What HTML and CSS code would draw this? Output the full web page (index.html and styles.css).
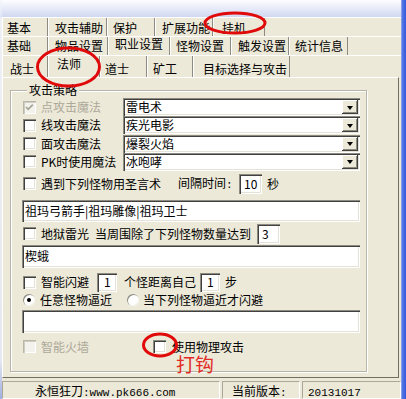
FILE: index.html
```html
<!DOCTYPE html>
<html lang="zh">
<head>
<meta charset="utf-8">
<title>挂机</title>
<link rel="stylesheet" href="styles.css">
</head>
<body>
<div class="window">
  <div class="lborder"></div>
  <div class="main">
    <div class="fade"></div>
    <div class="tabrow r1">
      <div class="tab w46 pl4">基本</div>
      <div class="tab w59 pl6">攻击辅助</div>
      <div class="tab w48">保护</div>
      <div class="tab w58 pl6">扩展功能</div>
      <div class="tab w52 pl8">挂机</div>
    </div>
    <div class="tabrow r2">
      <div class="tab w46 pl4">基础</div>
      <div class="tab w60 pl6">物品设置</div>
      <div class="tab w62 pl6 sel">职业设置</div>
      <div class="tab w61">怪物设置</div>
      <div class="tab w58 pl6">触发设置</div>
      <div class="tab w59">统计信息</div>
    </div>
    <div class="tabrow r3">
      <div class="tab w46 pl7">战士</div>
      <div class="tab w52 pl8 sel">法师</div>
      <div class="tab w47 pl4">道士</div>
      <div class="tab w46">矿工</div>
      <div class="tab w97 pl9">目标选择与攻击</div>
    </div>
    <div class="page">
      <fieldset class="group">
        <legend>攻击策略</legend>
        <div class="combos">
          <div class="row crow">
            <span class="cb dis"><svg width="13" height="13" viewBox="0 0 13 13"><path d="M3 6 L5.2 8.3 L9.8 3.7" fill="none" stroke="#a8a699" stroke-width="1.8"/></svg></span>
            <span class="lbl grey">点攻击魔法</span>
            <div class="combo sunk"><span class="val">雷电术</span><span class="dd"></span></div>
          </div>
          <div class="row crow">
            <span class="cb sunk"></span>
            <span class="lbl">线攻击魔法</span>
            <div class="combo sunk"><span class="val">疾光电影</span><span class="dd"></span></div>
          </div>
          <div class="row crow">
            <span class="cb sunk"></span>
            <span class="lbl">面攻击魔法</span>
            <div class="combo sunk"><span class="val">爆裂火焰</span><span class="dd"></span></div>
          </div>
          <div class="row crow">
            <span class="cb sunk"></span>
            <span class="lbl">PK时使用魔法</span>
            <div class="combo sunk"><span class="val">冰咆哮</span><span class="dd"></span></div>
          </div>
        </div>
        <div class="row srow mt3">
          <span class="cb sunk"></span>
          <span class="lbl">遇到下列怪物用圣言术</span>
          <span class="interval">间隔时间<span class="half">:</span></span>
          <span class="num sunk w23">10</span>
          <span class="ml5">秒</span>
        </div>
        <div class="field sunk h22 mt6">祖玛弓箭手|祖玛雕像|祖玛卫士</div>
        <div class="row srow mt2">
          <span class="cb sunk"></span>
          <span class="lbl">地狱雷光</span>
          <span class="ml6">当周围除了下列怪物数量达到</span>
          <span class="num sunk w23 ml6">3</span>
        </div>
        <div class="field sunk h23 mt1">楔蛾</div>
        <div class="row drow mt5">
          <span class="cb sunk"></span>
          <span class="lbl">智能闪避</span>
          <span class="num sunk w20 ml8">1</span>
          <span class="ml7">个怪距离自己</span>
          <span class="num sunk w20 ml4">1</span>
          <span class="ml5">步</span>
        </div>
        <div class="row rrow mt2">
          <span class="rd on"></span>
          <span class="rlbl">任意怪物逼近</span>
          <span class="rd gap15"></span>
          <span class="rlbl">当下列怪物逼近才闪避</span>
        </div>
        <div class="field sunk h23 mt4"></div>
        <div class="row lrow mt7">
          <span class="cb dis"></span>
          <span class="lbl grey">智能火墙</span>
          <span class="cb sunk gap64"></span>
          <span class="plbl">使用物理攻击</span>
        </div>
      </fieldset>
    </div>
    <div class="status">
      <div class="sp s1">永恒狂刀<span class="mono">:www.pk666.com</span></div>
      <div class="sp s2">当前版本<span class="mono">:</span></div>
      <div class="sp s3"><span class="mono">20131017</span></div>
    </div>
  </div>
  <div class="rborder"></div>
  <svg class="marks" width="406" height="399" viewBox="0 0 406 399">
    <ellipse cx="235" cy="23" rx="30" ry="10"/>
    <ellipse cx="68.5" cy="67" rx="31" ry="19"/>
    <ellipse cx="160" cy="345" rx="16.5" ry="11"/>
  </svg>
  <div class="note">打钩</div>
</div>
</body>
</html>
```
FILE: styles.css
```css
*{box-sizing:border-box;}
html,body{margin:0;padding:0;}
body{
  width:406px;height:399px;overflow:hidden;
  background:#ece9d8;color:#000;
  font-family:"Noto Sans CJK SC","Liberation Sans",sans-serif;
  font-size:12px;line-height:14px;
}
.window{position:relative;display:flex;width:406px;height:399px;}
.lborder{width:2px;flex:none;background:linear-gradient(#f7f8fd 0,#dfe5f6 17px,#eef0f4 18px,#e6e8ef 360px,#9fb0e0 100%);}
.main{width:399px;flex:none;display:flex;flex-direction:column;}
.rborder{width:5px;flex:none;background:linear-gradient(90deg,#b4c1ee 0,#5a7ae6 1px,#3059dc 100%);}
.fade{height:17px;background:linear-gradient(#fdfdfe,#d0d8f2);}

/* tabs */
.tabrow{display:flex;height:19px;border-top:1px solid #fff;}
.tabrow.r3{height:22px;}
.tab{
  height:100%;padding:3px 0 0 5px;
  border-left:1px solid #fff;border-right:1px solid #8d8b80;
  white-space:nowrap;
}
.r2 .tab{padding-top:2px;}
.r3 .tab{padding-top:6px;}
.r2 .tab.sel{padding-top:0;}
.r3 .tab.sel{padding-top:1px;}
.w46{width:46px;}.w47{width:47px;}.w48{width:48px;}.w52{width:52px;}
.w58{width:58px;}.w59{width:59px;}.w60{width:60px;}.w61{width:61px;}
.w62{width:62px;}.w97{width:97px;}
.pl4{padding-left:4px;}.pl6{padding-left:6px;}.pl7{padding-left:7px;}
.pl8{padding-left:8px;}.pl9{padding-left:9px;}

/* page */
.page{
  height:301px;margin-right:2px;
  border:1px solid;border-color:#fff #716f64 #716f64 #fff;
}
.group{
  margin:5px 0 0 7px;width:357px;height:289px;min-width:0;
  padding:1px 6px 0 11px;
  border:1px solid #b7b5a8;
  box-shadow:inset 1px 1px 0 #fff,1px 1px 0 #fff;
  display:flex;flex-direction:column;
}
.group legend{margin-left:5px;padding:0 2px;line-height:14px;background:#ece9d8;}

.combos{display:flex;flex-direction:column;gap:0.33px;}
.row{display:flex;align-items:center;white-space:nowrap;}
.crow{height:18px;}
.srow{height:20px;}
.drow{height:19px;}
.rrow{height:12px;}
.lrow{height:13px;line-height:13px;}

.sunk{
  background:#fff;
  box-shadow:inset 1px 1px 0 #8d8b80,inset 2px 2px 0 #404040,inset -1px -1px 0 #fff,inset -2px -2px 0 #e4e2d6;
}
.cb{width:13px;height:13px;flex:none;margin-left:1px;display:block;}
.cb svg{display:block;}
.cb.dis{background:#f3f2ec;box-shadow:inset 1px 1px 0 #b9b7aa,inset 2px 2px 0 #cfcdc2,inset -1px -1px 0 #fff;}
.lbl{margin-left:5px;}
.grey{color:#aca899;}

.combo{margin-left:auto;width:237px;height:18px;display:flex;align-items:center;}
.combo .val{flex:1;padding-left:3px;}
.dd{
  width:16px;height:14px;margin:0 2px 0 0;flex:none;
  background:#ece9d8;
  box-shadow:inset -1px -1px 0 #404040,inset 1px 1px 0 #fff,inset -2px -2px 0 #8d8b80;
  display:flex;align-items:center;justify-content:center;
}
.dd::after{content:"";border-left:3.5px solid transparent;border-right:3.5px solid transparent;border-top:4px solid #000;margin-top:1px;}

.interval{margin-left:17px;width:61px;}
.half{font-family:"Liberation Mono",monospace;font-size:11px;}
.num{height:20px;padding:3px 0 0 5px;flex:none;}
.drow .num{height:19px;padding-top:2px;padding-left:7px;}
.w20{width:20px;}.w23{width:23px;}
.ml4{margin-left:4px;}.ml5{margin-left:5px;}.ml6{margin-left:6px;}
.ml7{margin-left:7px;}.ml8{margin-left:8px;}
.mt1{margin-top:1px;}.mt2{margin-top:2px;}.mt3{margin-top:3px;}.mt4{margin-top:4px;}
.mt5{margin-top:5px;}.mt6{margin-top:6px;}.mt7{margin-top:7px;}

.field{width:100%;padding:0 0 0 3px;display:flex;align-items:center;flex:none;}
.h22{height:22px;}.h23{height:23px;}

.rd{
  width:12px;height:12px;border-radius:50%;flex:none;margin-left:1px;
  background:#fff;box-shadow:inset 1px 1px 0 #8d8b80,inset -1px -1px 0 #f4f3ee;
  position:relative;
}
.rd.on::after{content:"";position:absolute;left:4px;top:4px;width:4px;height:4px;border-radius:50%;background:#000;}
.rlbl{margin-left:5px;}
.gap15{margin-left:15px;}
.rrow .rlbl:last-child{margin-left:4px;}
.gap64{margin-left:64px;}
.plbl{margin-left:6px;}

/* status bar */
.status{height:21px;display:flex;gap:2px;padding-top:3px;}
.sp{
  height:18px;padding-top:1px;line-height:16px;white-space:nowrap;
  border:1px solid;border-color:#aca899 #fff #fff #aca899;
}
.s1{width:218px;padding-left:32px;}
.s2{width:78px;padding-left:9px;}
.s3{flex:1;padding-left:5px;}
.mono{font-family:"Liberation Mono",monospace;font-size:11px;}

/* annotations */
.marks{position:absolute;left:0;top:0;pointer-events:none;}
.marks ellipse{fill:none;stroke:#e00a0a;stroke-width:3;}
.note{
  position:absolute;left:176px;top:355px;
  font-size:19px;line-height:18px;color:#e32b26;
}
```
